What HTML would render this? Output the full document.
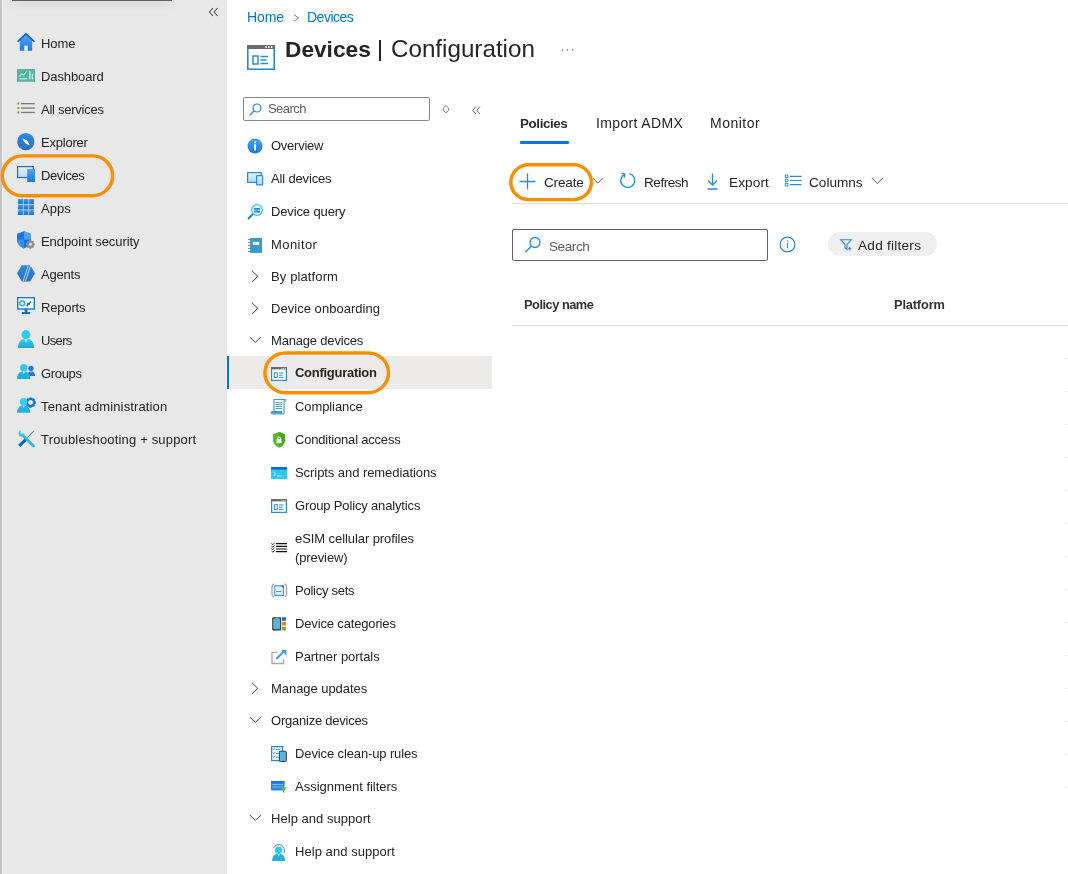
<!DOCTYPE html>
<html><head><meta charset="utf-8"><title>Devices | Configuration</title>
<style>
html,body{margin:0;padding:0;}
body{width:1068px;height:874px;overflow:hidden;background:#fff;position:relative;font-family:"Liberation Sans", sans-serif;-webkit-font-smoothing:antialiased;}
.t{position:absolute;white-space:nowrap;will-change:transform;}
.t b{font-weight:bold;}
.i{position:absolute;overflow:visible;}
.b{position:absolute;}
</style></head><body>
<div class="b" style="left:0px;top:0px;width:227px;height:874px;background:#e8e8e8"></div>
<div class="b" style="left:0px;top:0px;width:2px;height:874px;background:#c3c5c5"></div>
<div class="b" style="left:2px;top:0px;width:1px;height:874px;background:#efefef"></div>
<div class="b" style="left:12px;top:-1px;width:160px;height:2px;background:#5e5e5e;box-shadow:0 2px 8px rgba(0,0,0,0.2)"></div>
<svg class="i" style="left:208px;top:7px" width="11" height="10" viewBox="0 0 11 10"><path d="M5 1 L1.5 5 L5 9 M9.5 1 L6 5 L9.5 9" fill="none" stroke="#555" stroke-width="1.1"/></svg>
<svg class="i" style="left:17px;top:33px" width="18" height="18" viewBox="0 0 18 18"><defs><linearGradient id="ghm" x1="0" y1="0" x2="0" y2="1"><stop offset="0" stop-color="#5aa7f5"/><stop offset="1" stop-color="#1f7ae0"/></linearGradient></defs><path d="M9 1.2 L15.2 7 V17.8 H2.8 V7 Z" fill="url(#ghm)"/><path d="M0.6 8.6 L9 0.8 L17.4 8.6" fill="none" stroke="#0f62c2" stroke-width="1.7"/><rect x="7.3" y="12.6" width="3.4" height="5.2" fill="#e6eef6"/></svg>
<div class="t" style="left:40.9px;top:33.90px;font-size:13px;line-height:20px;color:#242424;font-weight:normal;letter-spacing:-0.066px;">Home</div>
<svg class="i" style="left:17px;top:69px" width="18" height="13" viewBox="0 0 18 13"><rect x="0" y="0" width="18" height="12.8" fill="#55b4a4"/><path d="M2.2 7.5 L4.5 5 L6.5 6.2 L9.5 2.5" stroke="#fff" stroke-width="0.9" fill="none"/><rect x="2.2" y="9.4" width="8" height="0.9" fill="#e8f6f3"/><rect x="12.4" y="2.2" width="1" height="8.2" fill="#fff"/><rect x="14.8" y="4.8" width="1" height="5.6" fill="#fff"/></svg>
<div class="t" style="left:40.9px;top:66.90px;font-size:13px;line-height:20px;color:#242424;font-weight:normal;letter-spacing:-0.1px;">Dashboard</div>
<svg class="i" style="left:17px;top:102px" width="18" height="12" viewBox="0 0 18 12"><circle cx="1.4" cy="1.6" r="1.1" fill="#58a82e"/><circle cx="1.4" cy="6" r="1.1" fill="#58a82e"/><circle cx="1.4" cy="10.4" r="1.1" fill="#58a82e"/><rect x="4" y="1" width="13.8" height="1.3" fill="#7a7a7a"/><rect x="4" y="5.4" width="13.8" height="1.3" fill="#7a7a7a"/><rect x="4" y="9.8" width="13.8" height="1.3" fill="#7a7a7a"/></svg>
<div class="t" style="left:40.9px;top:99.90px;font-size:13px;line-height:20px;color:#242424;font-weight:normal;letter-spacing:-0.256px;">All services</div>
<svg class="i" style="left:17px;top:133px" width="18" height="17" viewBox="0 0 18 17"><defs><linearGradient id="gex" x1="0" y1="0" x2="0" y2="1"><stop offset="0" stop-color="#2a8ae6"/><stop offset="1" stop-color="#2a6fc0"/></linearGradient></defs><circle cx="8.8" cy="8.7" r="8.6" fill="url(#gex)"/><path d="M5.3 5.5 Q10.5 6.2 12.7 12.3 Q7.5 11.5 5.3 5.5 Z" fill="#fff"/></svg>
<div class="t" style="left:40.9px;top:132.90px;font-size:13px;line-height:20px;color:#242424;font-weight:normal;letter-spacing:-0.227px;">Explorer</div>
<svg class="i" style="left:17px;top:166px" width="18" height="16" viewBox="0 0 18 16"><defs><linearGradient id="gdv" x1="0" y1="0" x2="0" y2="1"><stop offset="0" stop-color="#e3f3fc"/><stop offset="1" stop-color="#b5dcf5"/></linearGradient><linearGradient id="gdp" x1="0" y1="0" x2="0" y2="1"><stop offset="0" stop-color="#5a9ff0"/><stop offset="1" stop-color="#1f78de"/></linearGradient></defs><rect x="0.6" y="0.6" width="15.6" height="10.9" fill="url(#gdv)" stroke="#0f6fd6" stroke-width="1.2"/><rect x="10.2" y="3" width="7.8" height="13" fill="url(#gdp)"/></svg>
<div class="t" style="left:40.9px;top:165.90px;font-size:13px;line-height:20px;color:#242424;font-weight:normal;letter-spacing:-0.401px;">Devices</div>
<svg class="i" style="left:18px;top:199px" width="16" height="16" viewBox="0 0 16 16"><defs><linearGradient id="gap" x1="0" y1="0" x2="0" y2="1"><stop offset="0" stop-color="#4b9cf2"/><stop offset="1" stop-color="#0f6fd6"/></linearGradient></defs><rect x="0" y="0" width="4.9" height="4.9" fill="url(#gap)"/><rect x="0" y="5.55" width="4.9" height="4.9" fill="url(#gap)"/><rect x="0" y="11.1" width="4.9" height="4.9" fill="url(#gap)"/><rect x="5.55" y="0" width="4.9" height="4.9" fill="url(#gap)"/><rect x="5.55" y="5.55" width="4.9" height="4.9" fill="url(#gap)"/><rect x="5.55" y="11.1" width="4.9" height="4.9" fill="url(#gap)"/><rect x="11.1" y="0" width="4.9" height="4.9" fill="url(#gap)"/><rect x="11.1" y="5.55" width="4.9" height="4.9" fill="url(#gap)"/><rect x="11.1" y="11.1" width="4.9" height="4.9" fill="url(#gap)"/></svg>
<div class="t" style="left:40.9px;top:198.90px;font-size:13px;line-height:20px;color:#242424;font-weight:normal;letter-spacing:0.0px;">Apps</div>
<svg class="i" style="left:17px;top:231px" width="18" height="18" viewBox="0 0 18 18"><path d="M7 0.3 L14 2.8 V8.5 C14 12.5 11 15.8 7 17.4 C3 15.8 0 12.5 0 8.5 V2.8 Z" fill="#1a76dc"/><path d="M7 0.3 L14 2.8 V8.5 H7 Z" fill="#529ff0"/><path d="M0 8.5 H7 V17.4 C3 15.8 0 12.5 0 8.5Z" fill="#3c8fe8"/><g transform="translate(13.4 13.4)"><circle r="3.3" fill="#8c8c8c"/><rect x="-0.9" y="-4.4" width="1.8" height="2" fill="#8c8c8c" transform="rotate(0)"/><rect x="-0.9" y="-4.4" width="1.8" height="2" fill="#8c8c8c" transform="rotate(45)"/><rect x="-0.9" y="-4.4" width="1.8" height="2" fill="#8c8c8c" transform="rotate(90)"/><rect x="-0.9" y="-4.4" width="1.8" height="2" fill="#8c8c8c" transform="rotate(135)"/><rect x="-0.9" y="-4.4" width="1.8" height="2" fill="#8c8c8c" transform="rotate(180)"/><rect x="-0.9" y="-4.4" width="1.8" height="2" fill="#8c8c8c" transform="rotate(225)"/><rect x="-0.9" y="-4.4" width="1.8" height="2" fill="#8c8c8c" transform="rotate(270)"/><rect x="-0.9" y="-4.4" width="1.8" height="2" fill="#8c8c8c" transform="rotate(315)"/><circle r="1.4" fill="#e8e8e8"/></g></svg>
<div class="t" style="left:40.9px;top:231.90px;font-size:13px;line-height:20px;color:#242424;font-weight:normal;letter-spacing:-0.073px;">Endpoint security</div>
<svg class="i" style="left:17px;top:265px" width="18" height="17" viewBox="0 0 18 17"><defs><linearGradient id="gag" x1="0" y1="0" x2="0" y2="1"><stop offset="0" stop-color="#2a8ae8"/><stop offset="1" stop-color="#2a70c6"/></linearGradient></defs><path d="M4.8 0.3 H13.2 L18 8.3 L13.2 16.4 H4.8 L0 8.3 Z" fill="url(#gag)"/><path d="M11.2 0.8 L6.2 16 M13.5 0.8 L8.5 16" stroke="#e8f2fc" stroke-width="0.8"/></svg>
<div class="t" style="left:40.9px;top:264.90px;font-size:13px;line-height:20px;color:#242424;font-weight:normal;letter-spacing:-0.2px;">Agents</div>
<svg class="i" style="left:17px;top:297px" width="18" height="17" viewBox="0 0 18 17"><rect x="0.7" y="0.7" width="16.6" height="11.3" fill="#fff" stroke="#1a78d6" stroke-width="1.4"/><circle cx="5.2" cy="6.2" r="2.4" fill="none" stroke="#22b8ee" stroke-width="1.6"/><path d="M9.8 9.5 L10.8 6.5 L12 7.5 L13.6 4.2" stroke="#1a5fae" stroke-width="1.3" fill="none"/><rect x="7.7" y="12" width="2.6" height="3" fill="#1a6cc4"/><rect x="4.8" y="15" width="8.4" height="2" rx="0.6" fill="#1a6cc4"/></svg>
<div class="t" style="left:40.9px;top:297.90px;font-size:13px;line-height:20px;color:#242424;font-weight:normal;letter-spacing:-0.167px;">Reports</div>
<svg class="i" style="left:18px;top:330px" width="16" height="18" viewBox="0 0 16 18"><defs><linearGradient id="gus" x1="0" y1="0" x2="0" y2="1"><stop offset="0" stop-color="#38d0f5"/><stop offset="1" stop-color="#1aa6d6"/></linearGradient></defs><circle cx="8" cy="4.6" r="4.5" fill="#30c8f0"/><path d="M0 18 C0 12 3 8.8 8 8.8 C13 8.8 16 12 16 18 Z" fill="url(#gus)"/><path d="M6.3 9 L8 12.6 L9.7 9 Z" fill="#e8f8fd"/></svg>
<div class="t" style="left:40.9px;top:330.90px;font-size:13px;line-height:20px;color:#242424;font-weight:normal;letter-spacing:-0.65px;">Users</div>
<svg class="i" style="left:17px;top:364px" width="18" height="15" viewBox="0 0 18 15"><circle cx="14" cy="4.3" r="2.6" fill="#1a76de"/><path d="M10.6 12 C10.6 9 12 7.2 14 7.2 C16.5 7.2 18 9 18 12 Z" fill="#1a76de"/><path d="M13.2 7.4 L14 9 L14.8 7.4Z" fill="#d0e6fb"/><circle cx="6.8" cy="3.8" r="3.7" fill="#30c8f0"/><path d="M0 15 C0 10 2.5 7.4 6.8 7.4 C11 7.4 13.3 10 13.3 15 Z" fill="#1fb0dc"/><path d="M5.6 7.6 L6.8 10.3 L8 7.6 Z" fill="#e8f8fd"/></svg>
<div class="t" style="left:40.9px;top:363.90px;font-size:13px;line-height:20px;color:#242424;font-weight:normal;letter-spacing:-0.32px;">Groups</div>
<svg class="i" style="left:17px;top:397px" width="17" height="16" viewBox="0 0 17 16"><g transform="translate(13.6 5.6) scale(1.08)"><rect x="-1.1" y="-4.8" width="2.2" height="2.4" fill="#1a76de" transform="rotate(0)"/><rect x="-1.1" y="-4.8" width="2.2" height="2.4" fill="#1a76de" transform="rotate(45)"/><rect x="-1.1" y="-4.8" width="2.2" height="2.4" fill="#1a76de" transform="rotate(90)"/><rect x="-1.1" y="-4.8" width="2.2" height="2.4" fill="#1a76de" transform="rotate(135)"/><rect x="-1.1" y="-4.8" width="2.2" height="2.4" fill="#1a76de" transform="rotate(180)"/><rect x="-1.1" y="-4.8" width="2.2" height="2.4" fill="#1a76de" transform="rotate(225)"/><rect x="-1.1" y="-4.8" width="2.2" height="2.4" fill="#1a76de" transform="rotate(270)"/><rect x="-1.1" y="-4.8" width="2.2" height="2.4" fill="#1a76de" transform="rotate(315)"/><circle r="3.3" fill="none" stroke="#1a76de" stroke-width="2"/></g><circle cx="6.6" cy="4.8" r="3.7" fill="#34cdf4"/><path d="M0 15.8 C0 11.2 2.5 8.6 6.6 8.6 C10.7 8.6 13.2 11.2 13.2 15.8 Z" fill="#22b2e0"/><path d="M5.6 8.8 L6.6 11.2 L7.6 8.8 Z" fill="#e8f8fd"/></svg>
<div class="t" style="left:40.9px;top:396.90px;font-size:13px;line-height:20px;color:#242424;font-weight:normal;letter-spacing:0.13px;">Tenant administration</div>
<svg class="i" style="left:18px;top:430px" width="17" height="16" viewBox="0 0 17 16"><path d="M16 0.8 L8 8.8" stroke="#1a86c9" stroke-width="1"/><path d="M8.2 9.2 L1.2 15.8" stroke="#0f64b3" stroke-width="3"/><path d="M5.5 6 L15.5 16" stroke="#28b9e6" stroke-width="2.8" stroke-linecap="round"/><path d="M0.5 3.2 Q0.5 0.3 3.2 0.2 L2.2 2.4 L3.9 4.1 L6 3.3 Q6.2 6.8 3 6.8 Q0.5 6.2 0.5 3.2Z" fill="#34c6f0"/></svg>
<div class="t" style="left:40.9px;top:429.90px;font-size:13px;line-height:20px;color:#242424;font-weight:normal;letter-spacing:0.174px;">Troubleshooting + support</div>
<svg class="i" style="left:0;top:0" width="1068" height="874"><rect x="2.30" y="155.90" width="110.30" height="39.80" rx="20" fill="none" stroke="#fd8d00" stroke-width="3.4"/></svg>
<div class="t" style="left:246.5px;top:6.85px;font-size:14px;line-height:21px;color:#0078d4;font-weight:normal;letter-spacing:-0.1px;">Home</div>
<svg class="i" style="left:292.5px;top:14.4px" width="7" height="9" viewBox="0 0 7 9"><path d="M0.9 0.6 L5.6 3.9 L0.9 7.2" fill="none" stroke="#777" stroke-width="1"/></svg>
<div class="t" style="left:306.5px;top:6.85px;font-size:14px;line-height:21px;color:#0078d4;font-weight:normal;letter-spacing:-0.5px;">Devices</div>
<svg class="i" style="left:247px;top:45px" width="28" height="25" viewBox="0 0 28 25"><rect x="0.8" y="0.8" width="26.4" height="23.4" fill="#fff" stroke="#2a8ad6" stroke-width="1.6"/><rect x="0" y="0" width="28" height="4" fill="#6b6b6b"/><circle cx="19" cy="2" r="0.9" fill="#fff"/><circle cx="21.8" cy="2" r="0.9" fill="#fff"/><circle cx="24.6" cy="2" r="0.9" fill="#fff"/><rect x="6" y="11" width="5" height="8" fill="none" stroke="#2a8ad6" stroke-width="1.5"/><path d="M13.5 11.5 H21 M13.5 15 H19.5 M13.5 18.5 H21" stroke="#2a8ad6" stroke-width="1.5"/></svg>
<div class="t" style="left:284.7px;top:32.43px;font-size:22.7px;line-height:34px;color:#242424;font-weight:bold;letter-spacing:0px;">Devices</div>
<div class="b" style="left:379.3px;top:40px;width:1.6px;height:21px;background:#242424"></div>
<div class="t" style="left:391px;top:30.91px;font-size:24.2px;line-height:36px;color:#242424;font-weight:normal;letter-spacing:0px;"><span>Configuration</span></div>
<svg class="i" style="left:561px;top:48px" width="14" height="4" viewBox="0 0 14 4"><circle cx="1.5" cy="2" r="0.8" fill="#666"/><circle cx="6.5" cy="2" r="0.8" fill="#666"/><circle cx="11.5" cy="2" r="0.8" fill="#666"/></svg>
<div class="b" style="left:243px;top:97px;width:187px;height:24px;border:1px solid #8a8886;border-radius:2px;box-sizing:border-box;background:#fff"></div>
<svg class="i" style="left:249px;top:103px" width="13" height="13" viewBox="0 0 13 13"><circle cx="8" cy="5" r="4" fill="none" stroke="#2a8ad6" stroke-width="1.2"/><path d="M5.2 7.8 L0.7 12.3" stroke="#2a8ad6" stroke-width="1.3"/></svg>
<div class="t" style="left:267.8px;top:99.00px;font-size:13px;line-height:20px;color:#605e5c;font-weight:normal;letter-spacing:-0.55px;">Search</div>
<svg class="i" style="left:442.5px;top:104.5px" width="7" height="9" viewBox="0 0 7 9"><path d="M3 0.6 L5.6 3.1 V5.4 L3 7.9 L0.4 5.4 V3.1 Z" fill="none" stroke="#7a7a7a" stroke-width="1"/></svg>
<svg class="i" style="left:471.5px;top:105.5px" width="9" height="9" viewBox="0 0 9 9"><path d="M4 0.5 L0.8 4.3 L4 8 M8 0.5 L4.8 4.3 L8 8" fill="none" stroke="#666" stroke-width="1"/></svg>
<div class="b" style="left:227px;top:356px;width:265px;height:33px;background:#edebe9"></div>
<div class="b" style="left:227px;top:356px;width:2px;height:33px;background:#0078d4"></div>
<svg class="i" style="left:247px;top:138px" width="16" height="16" viewBox="0 0 16 16"><defs><linearGradient id="gov" x1="0" y1="0" x2="0" y2="1"><stop offset="0" stop-color="#4aa3ef"/><stop offset="1" stop-color="#1b79d6"/></linearGradient></defs><circle cx="8" cy="8" r="7.5" fill="url(#gov)"/><circle cx="8" cy="4.3" r="1.1" fill="#fff"/><rect x="7.1" y="6.3" width="1.8" height="6.3" fill="#fff"/></svg>
<div class="t" style="left:271.0px;top:135.50px;font-size:13px;line-height:20px;color:#242424;font-weight:normal;letter-spacing:-0.258px;">Overview</div>
<svg class="i" style="left:247px;top:172px" width="16" height="14" viewBox="0 0 16 14"><defs><linearGradient id="gad" x1="0" y1="0" x2="0" y2="1"><stop offset="0" stop-color="#e0f1fc"/><stop offset="1" stop-color="#b3daf6"/></linearGradient></defs><rect x="0.6" y="0.6" width="13.6" height="9.8" fill="url(#gad)" stroke="#2a88e0" stroke-width="1.2"/><rect x="9.6" y="3.6" width="6" height="9.2" rx="0.6" fill="url(#gad)" stroke="#2a88e0" stroke-width="1.2"/></svg>
<div class="t" style="left:271.0px;top:168.50px;font-size:13px;line-height:20px;color:#242424;font-weight:normal;letter-spacing:-0.16px;">All devices</div>
<svg class="i" style="left:247px;top:204px" width="16" height="16" viewBox="0 0 16 16"><circle cx="10" cy="6" r="5.3" fill="#e9f9ff" stroke="#3cc7f2" stroke-width="1.3"/><rect x="6.8" y="4" width="6.4" height="1.8" rx="0.9" fill="#2a7fd6"/><rect x="6.8" y="6.6" width="6.4" height="1.8" rx="0.9" fill="#2a7fd6"/><path d="M6 10 L1 15" stroke="#1b7dc9" stroke-width="1.8"/></svg>
<div class="t" style="left:271.0px;top:201.50px;font-size:13px;line-height:20px;color:#242424;font-weight:normal;letter-spacing:-0.128px;">Device query</div>
<svg class="i" style="left:248px;top:238px" width="14" height="15" viewBox="0 0 14 15"><rect x="2.1" y="0" width="11.9" height="14.9" fill="#3a9ad0"/><rect x="4.9" y="3.9" width="6.3" height="3.1" fill="#fff"/><rect x="0" y="1.00" width="3" height="0.8" fill="#707070"/><rect x="0" y="4.03" width="3" height="0.8" fill="#707070"/><rect x="0" y="7.06" width="3" height="0.8" fill="#707070"/><rect x="0" y="10.09" width="3" height="0.8" fill="#707070"/><rect x="0" y="13.12" width="3" height="0.8" fill="#707070"/></svg>
<div class="t" style="left:271.0px;top:234.50px;font-size:13px;line-height:20px;color:#242424;font-weight:normal;letter-spacing:0.434px;">Monitor</div>
<svg class="i" style="left:251px;top:269.5px" width="8" height="13" viewBox="0 0 8 13"><path d="M1 0.8 L6.8 6.3 L1 11.8" fill="none" stroke="#444" stroke-width="1"/></svg>
<div class="t" style="left:271.0px;top:266.50px;font-size:13px;line-height:20px;color:#242424;font-weight:normal;letter-spacing:0.12px;">By platform</div>
<svg class="i" style="left:251px;top:301.5px" width="8" height="13" viewBox="0 0 8 13"><path d="M1 0.8 L6.8 6.3 L1 11.8" fill="none" stroke="#444" stroke-width="1"/></svg>
<div class="t" style="left:271.0px;top:298.50px;font-size:13px;line-height:20px;color:#242424;font-weight:normal;letter-spacing:0.039px;">Device onboarding</div>
<svg class="i" style="left:249px;top:336px" width="13" height="8" viewBox="0 0 13 8"><path d="M0.8 1 L6.3 6.5 L11.8 1" fill="none" stroke="#444" stroke-width="1"/></svg>
<div class="t" style="left:271.0px;top:330.50px;font-size:13px;line-height:20px;color:#242424;font-weight:normal;letter-spacing:-0.183px;">Manage devices</div>
<svg class="i" style="left:271px;top:367px" width="16" height="14" viewBox="0 0 16 14"><rect x="0.6" y="0.6" width="14.8" height="12.8" fill="#fff" stroke="#2a8ad6" stroke-width="1.2"/><rect x="0" y="0" width="16" height="2.4" fill="#6b6b6b"/><circle cx="11" cy="1.2" r="0.5" fill="#fff"/><circle cx="12.6" cy="1.2" r="0.5" fill="#fff"/><circle cx="14.2" cy="1.2" r="0.5" fill="#fff"/><rect x="3.3" y="5.8" width="3" height="4.8" fill="none" stroke="#2a8ad6" stroke-width="1"/><path d="M8 6 H12.5 M8 8.2 H11.5 M8 10.4 H12.5" stroke="#2a8ad6" stroke-width="1"/></svg>
<div class="t" style="left:295.0px;top:363.30px;font-size:13px;line-height:20px;color:#242424;font-weight:normal;letter-spacing:-0.276px;"><b>Configuration</b></div>
<svg class="i" style="left:271px;top:399px" width="16" height="16" viewBox="0 0 16 16"><path d="M3 14 V1 Q3 0.5 3.5 0.5 H14 Q15 0.5 15 1.5 Q15 2 14 2 H13 V14 Q13 15 12 15 H2 Q0 15 0 13.5 Q0 12.5 2 12.5 H11" fill="#fff" stroke="#3a9ad6" stroke-width="1.1"/><path d="M0.5 13.5 Q0.5 12.5 2 12.5 H11 V14.8 H2 Q0.5 14.8 0.5 13.5Z" fill="#3a9ad6"/><path d="M4.5 3.5 H11 M4.5 5.5 H11 M4.5 7.5 H11 M4.5 9.5 H11" stroke="#3a9ad6" stroke-width="0.9"/></svg>
<div class="t" style="left:295.0px;top:396.50px;font-size:13px;line-height:20px;color:#242424;font-weight:normal;letter-spacing:-0.09px;">Compliance</div>
<svg class="i" style="left:273px;top:432px" width="12" height="16" viewBox="0 0 12 16"><path d="M6 0 L12 2.2 V8 C12 11.5 9.5 14 6 15.5 C2.5 14 0 11.5 0 8 V2.2 Z" fill="#5cb82b"/><path d="M6 0 L12 2.2 V8 C12 11.5 9.5 14 6 15.5 Z" fill="#4aa51f"/><rect x="3.5" y="7.2" width="5" height="4" fill="#fff"/><path d="M4.6 7.4 V5.8 Q6 4 7.4 5.8 V7.4" fill="none" stroke="#fff" stroke-width="1"/></svg>
<div class="t" style="left:295.0px;top:429.50px;font-size:13px;line-height:20px;color:#242424;font-weight:normal;letter-spacing:-0.202px;">Conditional access</div>
<svg class="i" style="left:271px;top:467px" width="16" height="12" viewBox="0 0 16 12"><rect x="0" y="0" width="16" height="12" fill="#2dcbf1"/><rect x="0" y="0" width="16" height="2.6" fill="#0f6fd0"/><path d="M2.5 5 L4.7 7 L2.5 9" fill="none" stroke="#cdf3fd" stroke-width="0.9"/><rect x="6" y="8.6" width="4.5" height="0.9" fill="#cdf3fd"/></svg>
<div class="t" style="left:295.0px;top:462.50px;font-size:13px;line-height:20px;color:#242424;font-weight:normal;letter-spacing:-0.063px;">Scripts and remediations</div>
<svg class="i" style="left:271px;top:499px" width="16" height="14" viewBox="0 0 16 14"><rect x="0.6" y="0.6" width="14.8" height="12.8" fill="#fff" stroke="#2a8ad6" stroke-width="1.2"/><rect x="0" y="0" width="16" height="2.4" fill="#6b6b6b"/><circle cx="11" cy="1.2" r="0.5" fill="#fff"/><circle cx="12.6" cy="1.2" r="0.5" fill="#fff"/><circle cx="14.2" cy="1.2" r="0.5" fill="#fff"/><rect x="3.3" y="5.8" width="3" height="4.8" fill="none" stroke="#2a8ad6" stroke-width="1"/><path d="M8 6 H12.5 M8 8.2 H11.5 M8 10.4 H12.5" stroke="#2a8ad6" stroke-width="1"/></svg>
<div class="t" style="left:295.0px;top:495.50px;font-size:13px;line-height:20px;color:#242424;font-weight:normal;letter-spacing:-0.153px;">Group Policy analytics</div>
<svg class="i" style="left:271px;top:542px" width="17" height="13" viewBox="0 0 17 13"><path d="M0.4 1.4 L1.9 2.7 L3.6 0.7 M0.4 3.9 L1.9 5.2 L3.6 3.2 M0.4 6.4 L1.9 7.7 L3.6 5.7 M0.4 8.9 L1.9 10.2 L3.6 8.2" fill="none" stroke="#222" stroke-width="0.9"/><path d="M5 1.6 H16 M5 4.3 H16 M5 7 H16 M5 9.7 H16" stroke="#111" stroke-width="1.2"/></svg>
<div class="t" style="left:295.0px;top:528.50px;font-size:13px;line-height:20px;color:#242424;font-weight:normal;letter-spacing:-0.077px;">eSIM cellular profiles</div>
<div class="t" style="left:295.0px;top:547.50px;font-size:13px;line-height:20px;color:#242424;font-weight:normal;letter-spacing:-0.103px;">(preview)</div>
<svg class="i" style="left:271px;top:583px" width="17" height="15" viewBox="0 0 17 15"><path d="M3 0.8 Q1 1.5 1 4 V11 Q1 13.5 3 14.2" fill="none" stroke="#9a9a9a" stroke-width="1.2"/><path d="M13.5 0.8 Q15.5 1.5 15.5 4 V11 Q15.5 13.5 13.5 14.2" fill="none" stroke="#9a9a9a" stroke-width="1.2"/><rect x="3.8" y="2.8" width="8.6" height="9.6" fill="#e6f2fc" stroke="#3a92e6" stroke-width="1.1"/><path d="M9.5 2.5 H12.5 V5.5 Z" fill="#1f7ad9"/><rect x="5.2" y="8" width="5.5" height="1" fill="#8a8a8a"/></svg>
<div class="t" style="left:295.0px;top:580.50px;font-size:13px;line-height:20px;color:#242424;font-weight:normal;letter-spacing:-0.26px;">Policy sets</div>
<svg class="i" style="left:272px;top:616.5px" width="16" height="15" viewBox="0 0 16 15"><rect x="0.2" y="0.2" width="9" height="13.4" rx="1" fill="#3a3a3a"/><rect x="1.3" y="1.7" width="6.8" height="10.4" fill="#5ab4e0"/><rect x="3.5" y="0.9" width="3" height="0.7" fill="#ddd"/><rect x="10" y="0.2" width="4" height="3.6" fill="#1e6fc1"/><rect x="10" y="5" width="4" height="3.6" fill="#f07f1c"/><rect x="10" y="9.8" width="4" height="3.6" fill="#6bb534"/></svg>
<div class="t" style="left:295.0px;top:613.50px;font-size:13px;line-height:20px;color:#242424;font-weight:normal;letter-spacing:-0.151px;">Device categories</div>
<svg class="i" style="left:271px;top:649px" width="16" height="16" viewBox="0 0 16 16"><path d="M6 3.3 H1 V14.5 H12.5 V10" fill="none" stroke="#a8a8a8" stroke-width="1.3"/><path d="M5.3 10 L12.5 2.8" stroke="#3aa0f0" stroke-width="2"/><path d="M10 1 H15.5 V6.5 Z" fill="#3aa0f0"/></svg>
<div class="t" style="left:295.0px;top:646.50px;font-size:13px;line-height:20px;color:#242424;font-weight:normal;letter-spacing:-0.043px;">Partner portals</div>
<svg class="i" style="left:251px;top:681.5px" width="8" height="13" viewBox="0 0 8 13"><path d="M1 0.8 L6.8 6.3 L1 11.8" fill="none" stroke="#444" stroke-width="1"/></svg>
<div class="t" style="left:271.0px;top:678.50px;font-size:13px;line-height:20px;color:#242424;font-weight:normal;letter-spacing:-0.048px;">Manage updates</div>
<svg class="i" style="left:249px;top:716px" width="13" height="8" viewBox="0 0 13 8"><path d="M0.8 1 L6.3 6.5 L11.8 1" fill="none" stroke="#444" stroke-width="1"/></svg>
<div class="t" style="left:271.0px;top:710.50px;font-size:13px;line-height:20px;color:#242424;font-weight:normal;letter-spacing:-0.225px;">Organize devices</div>
<svg class="i" style="left:271px;top:746px" width="16" height="16" viewBox="0 0 16 16"><rect x="0.6" y="0.6" width="11.1" height="14" fill="#e6f3fb" stroke="#2a8ad6" stroke-width="1.2"/><path d="M2 3.0 L2.8 3.8 L3.8 2.6" stroke="#1a6fc4" stroke-width="0.8" fill="none"/><rect x="5" y="3.1" width="4.5" height="0.8" fill="#3a92d6"/><path d="M2 6.8 L2.8 7.6 L3.8 6.4" stroke="#1a6fc4" stroke-width="0.8" fill="none"/><rect x="5" y="6.9" width="4.5" height="0.8" fill="#3a92d6"/><path d="M2 10.6 L2.8 11.4 L3.8 10.2" stroke="#1a6fc4" stroke-width="0.8" fill="none"/><rect x="5" y="10.7" width="4.5" height="0.8" fill="#3a92d6"/><rect x="8.4" y="5.3" width="6.9" height="10.2" rx="0.8" fill="#5ab4e0" stroke="#3a3a3a" stroke-width="1"/></svg>
<div class="t" style="left:295.0px;top:743.50px;font-size:13px;line-height:20px;color:#242424;font-weight:normal;letter-spacing:-0.12px;">Device clean-up rules</div>
<svg class="i" style="left:271px;top:781px" width="16" height="12" viewBox="0 0 16 12"><rect x="0" y="0" width="13.5" height="9.5" fill="#2a86e4"/><rect x="0" y="0" width="13.5" height="1.6" fill="#1a70cf"/><path d="M1.3 3.5 H12 M1.3 6 H12" stroke="#9fd0f7" stroke-width="0.7"/><path d="M9.5 6.2 H16 L13.5 9 V11.8 H12 V9 Z" fill="#66c42a"/></svg>
<div class="t" style="left:295.0px;top:776.50px;font-size:13px;line-height:20px;color:#242424;font-weight:normal;letter-spacing:-0.013px;">Assignment filters</div>
<svg class="i" style="left:249px;top:814px" width="13" height="8" viewBox="0 0 13 8"><path d="M0.8 1 L6.3 6.5 L11.8 1" fill="none" stroke="#444" stroke-width="1"/></svg>
<div class="t" style="left:271.0px;top:808.50px;font-size:13px;line-height:20px;color:#242424;font-weight:normal;letter-spacing:0.041px;">Help and support</div>
<svg class="i" style="left:272px;top:844px" width="14" height="17" viewBox="0 0 14 17"><path d="M1.6 3.8 A5.3 5.3 0 0 1 11.9 9.2" fill="none" stroke="#4a4a4a" stroke-width="0.75"/><circle cx="6.6" cy="6.3" r="3.7" fill="#2ccbf2"/><path d="M0.1 17 C0.1 12.2 2.6 9.7 6.6 9.7 C10.6 9.7 13.2 12.2 13.2 17 Z" fill="#1fb3de"/><path d="M5.6 9.9 L6.6 12.8 L7.6 9.9 Z" fill="#e8f9fd"/></svg>
<div class="t" style="left:295.0px;top:841.50px;font-size:13px;line-height:20px;color:#242424;font-weight:normal;letter-spacing:0.054px;">Help and support</div>
<svg class="i" style="left:0;top:0" width="1068" height="874"><rect x="264.90" y="353.00" width="123.60" height="39.70" rx="20.5" fill="none" stroke="#fd8d00" stroke-width="3.4"/></svg>
<div class="t" style="left:519.8px;top:113.56px;font-size:13.4px;line-height:20px;color:#2e2e2e;font-weight:normal;letter-spacing:-0.4px;"><b>Policies</b></div>
<div class="b" style="left:520px;top:141px;width:49px;height:2.5px;background:#0078d4;border-radius:1px"></div>
<div class="t" style="left:595.8px;top:113.05px;font-size:14px;line-height:21px;color:#242424;font-weight:normal;letter-spacing:0.35px;">Import ADMX</div>
<div class="t" style="left:709.6px;top:113.25px;font-size:14px;line-height:21px;color:#242424;font-weight:normal;letter-spacing:0.5px;">Monitor</div>
<svg class="i" style="left:519px;top:173px" width="17" height="17" viewBox="0 0 17 17"><path d="M8.5 0.5 V16.5 M0.5 8.5 H16.5" stroke="#2a8ad6" stroke-width="1.3"/></svg>
<div class="t" style="left:543.7px;top:173.49px;font-size:13.6px;line-height:20px;color:#242424;font-weight:normal;letter-spacing:-0.2px;">Create</div>
<svg class="i" style="left:592px;top:177px" width="12" height="8" viewBox="0 0 12 8"><path d="M0.8 1 L5.8 6 L10.8 1" fill="none" stroke="#555" stroke-width="1"/></svg>
<svg class="i" style="left:619px;top:172px" width="18" height="18" viewBox="0 0 18 18"><path d="M5.5 2.2 A7 7 0 1 0 10.5 1.6" fill="none" stroke="#2a8ad6" stroke-width="1.3"/><path d="M2.5 1.2 L6 2.2 L5 5.8" fill="none" stroke="#2a8ad6" stroke-width="1.3"/></svg>
<div class="t" style="left:644.0px;top:173.49px;font-size:13.6px;line-height:20px;color:#242424;font-weight:normal;letter-spacing:-0.5px;">Refresh</div>
<svg class="i" style="left:707px;top:173px" width="11" height="17" viewBox="0 0 11 17"><path d="M5.5 0.5 V12 M1 7.5 L5.5 12 L10 7.5 M0.5 16 H10.5" fill="none" stroke="#2a8ad6" stroke-width="1.3"/></svg>
<div class="t" style="left:729.2px;top:173.49px;font-size:13.6px;line-height:20px;color:#242424;font-weight:normal;letter-spacing:0.1px;">Export</div>
<svg class="i" style="left:784px;top:174px" width="18" height="13" viewBox="0 0 18 13"><rect x="1.3" y="1" width="2.6" height="2.6" fill="none" stroke="#2a8ad6" stroke-width="0.9"/><rect x="1.3" y="5.2" width="2.6" height="2.6" fill="none" stroke="#2a8ad6" stroke-width="0.9"/><rect x="1.3" y="9.4" width="2.6" height="2.6" fill="none" stroke="#2a8ad6" stroke-width="0.9"/><path d="M6 2.3 H17.5 M6 6.5 H17.5 M6 10.7 H17.5" stroke="#2a8ad6" stroke-width="1.2"/></svg>
<div class="t" style="left:809.2px;top:173.49px;font-size:13.6px;line-height:20px;color:#242424;font-weight:normal;letter-spacing:0px;">Columns</div>
<svg class="i" style="left:871px;top:177px" width="13" height="8" viewBox="0 0 13 8"><path d="M0.8 1 L6.3 6.5 L11.8 1" fill="none" stroke="#555" stroke-width="1"/></svg>
<div class="b" style="left:512px;top:203px;width:556px;height:1px;background:#e1dfdd"></div>
<svg class="i" style="left:0;top:0" width="1068" height="874"><rect x="510.80" y="164.80" width="80.60" height="34.80" rx="18" fill="none" stroke="#fd8d00" stroke-width="3.4"/></svg>
<div class="b" style="left:512px;top:229px;width:256px;height:32px;border:1px solid #605e5c;border-radius:2px;box-sizing:border-box;background:#fff"></div>
<svg class="i" style="left:524px;top:236px" width="18" height="18" viewBox="0 0 18 18"><circle cx="11" cy="6.5" r="5" fill="none" stroke="#2a8ad6" stroke-width="1.3"/><path d="M7.4 10.1 L1.3 16.2" stroke="#2a8ad6" stroke-width="1.4"/></svg>
<div class="t" style="left:548.8px;top:237.09px;font-size:13.6px;line-height:20px;color:#605e5c;font-weight:normal;letter-spacing:-0.45px;">Search</div>
<svg class="i" style="left:779px;top:236px" width="17" height="17" viewBox="0 0 17 17"><circle cx="8.5" cy="8.5" r="7.4" fill="none" stroke="#2a8ad6" stroke-width="1.2"/><circle cx="8.5" cy="5" r="0.8" fill="#2a8ad6"/><rect x="7.9" y="6.8" width="1.2" height="5.5" fill="#2a8ad6"/></svg>
<div class="b" style="left:828px;top:232px;width:109px;height:24px;background:#efefef;border-radius:12px"></div>
<svg class="i" style="left:840px;top:239px" width="13" height="12" viewBox="0 0 13 12"><path d="M0.7 0.7 H11.3 L7 5.5 V10.5 L5 9 V5.5 Z" fill="none" stroke="#2a8ad6" stroke-width="1.1"/><path d="M9.8 8 V11.5 M8 9.7 H11.5" stroke="#2a8ad6" stroke-width="1"/></svg>
<div class="t" style="left:858px;top:236.29px;font-size:13.6px;line-height:20px;color:#242424;font-weight:normal;letter-spacing:0.25px;">Add filters</div>
<div class="t" style="left:524.4px;top:294.96px;font-size:12.8px;line-height:19px;color:#323130;font-weight:normal;letter-spacing:-0.48px;"><b>Policy name</b></div>
<div class="t" style="left:894px;top:294.96px;font-size:12.8px;line-height:19px;color:#323130;font-weight:normal;letter-spacing:-0.15px;"><b>Platform</b></div>
<div class="b" style="left:512px;top:325px;width:556px;height:1px;background:#e6e6e6"></div>
<div class="b" style="left:1066px;top:358px;width:2px;height:1px;background:#e6e6e6"></div>
<div class="b" style="left:1066px;top:391px;width:2px;height:1px;background:#e6e6e6"></div>
<div class="b" style="left:1066px;top:424px;width:2px;height:1px;background:#e6e6e6"></div>
<div class="b" style="left:1066px;top:457px;width:2px;height:1px;background:#e6e6e6"></div>
<div class="b" style="left:1066px;top:490px;width:2px;height:1px;background:#e6e6e6"></div>
<div class="b" style="left:1066px;top:523px;width:2px;height:1px;background:#e6e6e6"></div>
<div class="b" style="left:1066px;top:556px;width:2px;height:1px;background:#e6e6e6"></div>
<div class="b" style="left:1066px;top:589px;width:2px;height:1px;background:#e6e6e6"></div>
<div class="b" style="left:1066px;top:622px;width:2px;height:1px;background:#e6e6e6"></div>
<div class="b" style="left:1066px;top:655px;width:2px;height:1px;background:#e6e6e6"></div>
<div class="b" style="left:1066px;top:688px;width:2px;height:1px;background:#e6e6e6"></div>
<div class="b" style="left:1066px;top:721px;width:2px;height:1px;background:#e6e6e6"></div>
<div class="b" style="left:1066px;top:754px;width:2px;height:1px;background:#e6e6e6"></div>
<div class="b" style="left:1066px;top:787px;width:2px;height:1px;background:#e6e6e6"></div>
</body></html>
